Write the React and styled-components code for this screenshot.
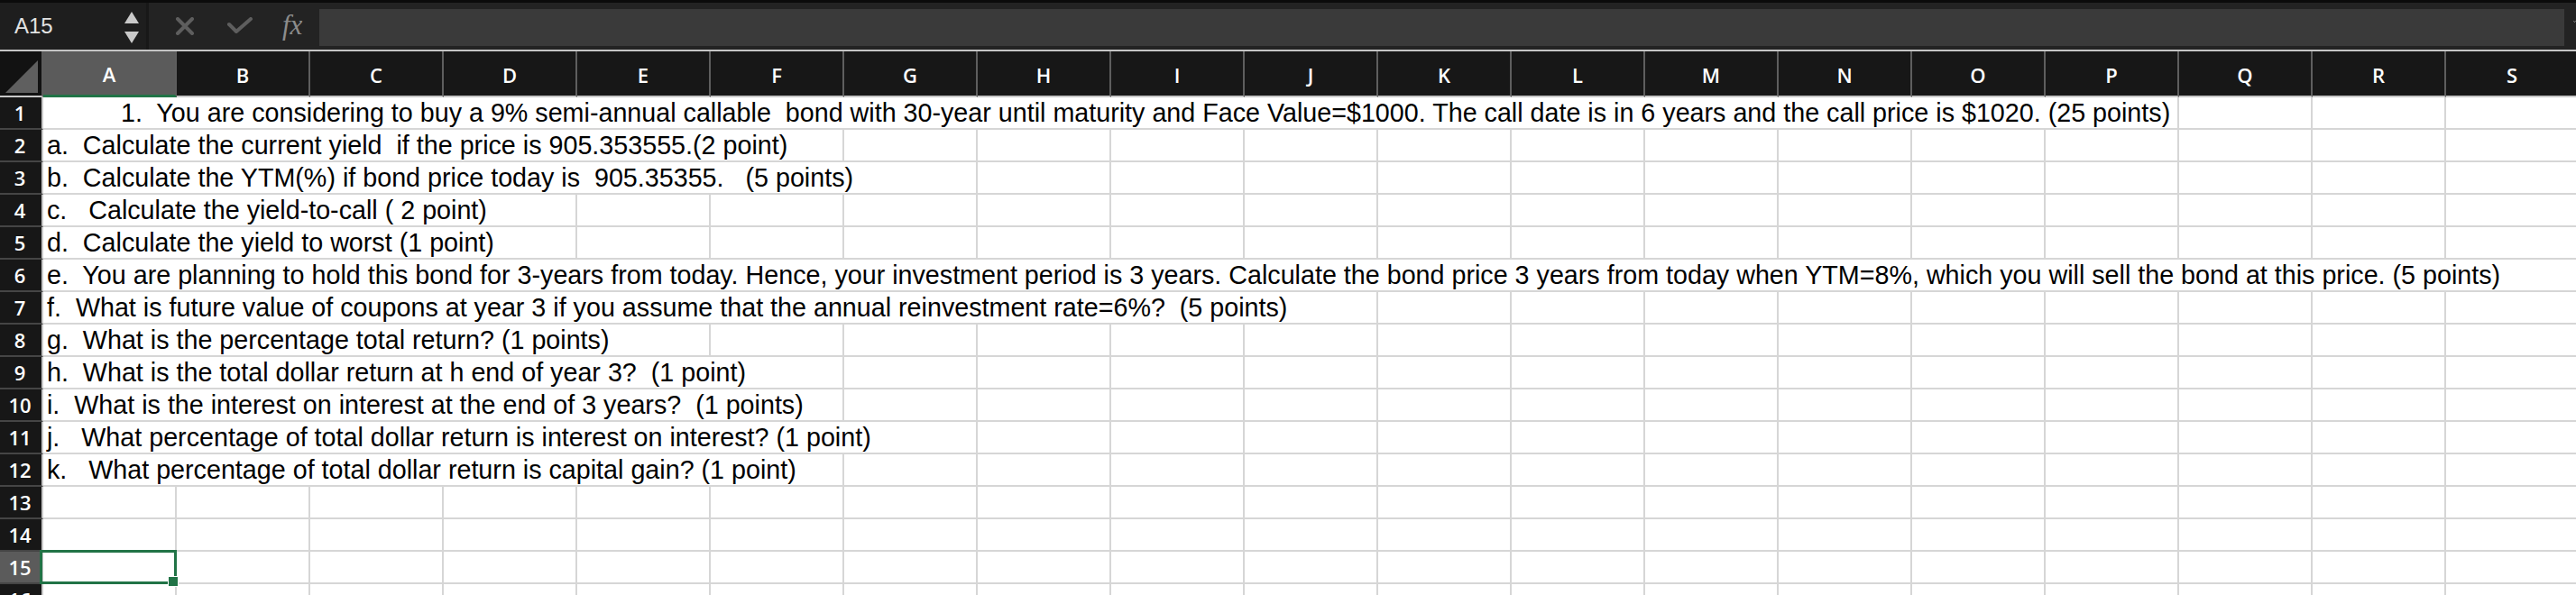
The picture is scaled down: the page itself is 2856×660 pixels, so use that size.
import React from 'react';
import styled, { createGlobalStyle } from 'styled-components';

const GlobalStyle = createGlobalStyle`
  html, body {
    margin: 0;
    padding: 0;
    background: #ffffff;
    overflow: hidden;
  }
`;

const COLS = 'ABCDEFGHIJKLMNOPQRS'.split('');

// text rows: span is the number of columns the text runs over
const ROWS = [
  { text: '1.  You are considering to buy a 9% semi-annual callable  bond with 30-year until maturity and Face Value=$1000. The call date is in 6 years and the call price is $1020. (25 points)', span: 16, indent: 86 },
  { text: 'a.  Calculate the current yield  if the price is 905.353555.(2 point)', span: 6 },
  { text: 'b.  Calculate the YTM(%) if bond price today is  905.35355.   (5 points)', span: 7 },
  { text: 'c.   Calculate the yield-to-call ( 2 point)', span: 4 },
  { text: 'd.  Calculate the yield to worst (1 point)', span: 4 },
  { text: 'e.  You are planning to hold this bond for 3-years from today. Hence, your investment period is 3 years. Calculate the bond price 3 years from today when YTM=8%, which you will sell the bond at this price. (5 points)', span: 19 },
  { text: 'f.  What is future value of coupons at year 3 if you assume that the annual reinvestment rate=6%?  (5 points)', span: 10 },
  { text: 'g.  What is the percentage total return? (1 points)', span: 5 },
  { text: 'h.  What is the total dollar return at h end of year 3?  (1 point)', span: 6 },
  { text: 'i.  What is the interest on interest at the end of 3 years?  (1 points)', span: 6 },
  { text: 'j.   What percentage of total dollar return is interest on interest? (1 point)', span: 7 },
  { text: 'k.   What percentage of total dollar return is capital gain? (1 point)', span: 6 },
  null,
  null,
  null,
  null,
];

const SELECTED_ROW = 15;

const Page = styled.div`
  width: 2856px;
  height: 660px;
  overflow: hidden;
  background: #ffffff;
`;

const FormulaBar = styled.div`
  height: 52px;
  border-top: 3px solid #0b0b0b;
  border-bottom: 2px solid #c4c4c4;
  background: #232323;
  display: flex;
  align-items: stretch;
`;

const NameBox = styled.div`
  width: 165px;
  background: #1e1e1e;
  border-right: 3px solid #181818;
  display: flex;
  align-items: center;
  justify-content: space-between;
  padding: 0 8px 0 16px;
  box-sizing: border-box;
  font-family: 'Liberation Sans', Arial, sans-serif;
  font-size: 24px;
  color: #e2e2e2;
`;

const Stepper = styled.div`
  display: flex;
  flex-direction: column;
  gap: 9px;
  padding-top: 2px;
`;

const Actions = styled.div`
  width: 189px;
  display: flex;
  align-items: center;
  padding-left: 29px;
  box-sizing: border-box;
  gap: 35px;
`;

const Fx = styled.span`
  font-family: 'Liberation Serif', 'Times New Roman', serif;
  font-style: italic;
  font-size: 31px;
  color: #8c8c8c;
  margin-left: -3px;
  line-height: 1;
  padding-bottom: 4px;
`;

const FormulaInput = styled.div`
  flex: 1;
  margin: 7px 10px 4px 0;
  background: #3a3a3a;
`;

const Chevron = styled.div`
  width: 3px;
  display: flex;
  align-items: center;
  overflow: hidden;
  padding-bottom: 10px;
`;

const Sheet = styled.div`
  display: grid;
  grid-template-columns: 48px repeat(19, 148px);
  grid-template-rows: 51px repeat(16, 36px);
`;

const Corner = styled.div`
  background: #121212;
  border-right: 2px solid #5c5c5c;
  border-bottom: 2px solid #c8c8c8;
  display: flex;
  align-items: flex-end;
  justify-content: flex-end;
  padding: 0 4px 3px 0;
`;

const ColHeader = styled.div`
  background: ${(p) => (p.$active ? '#5b5b5b' : '#171717')};
  border-right: 2px solid #5e5e5e;
  border-bottom: ${(p) => (p.$active ? '3px solid #217346' : '2px solid #c8c8c8')};
  display: flex;
  align-items: center;
  justify-content: center;
  font-family: 'Open Sans', 'Noto Sans', sans-serif;
  font-size: 22px;
  font-weight: 600;
  color: #ffffff;
  padding-top: 2px;
`;

const RowHeader = styled.div`
  background: ${(p) => (p.$active ? '#5b5b5b' : '#171717')};
  border-right: 2px solid #c9c9c9;
  border-bottom: 2px solid #454545;
  display: flex;
  align-items: center;
  justify-content: center;
  font-family: 'Open Sans', 'Noto Sans', sans-serif;
  font-size: 22px;
  font-weight: 600;
  color: #ffffff;
  padding-right: 2px;
  overflow: hidden;
`;

const Cell = styled.div`
  grid-column: span ${(p) => p.$span || 1};
  position: relative;
  background: #ffffff;
  border-right: 2px solid #d6d6d6;
  border-bottom: 2px solid #d6d6d6;
  font-family: 'Liberation Sans', Arial, Helvetica, sans-serif;
  font-size: 28.7px;
  line-height: 35px;
  color: #000000;
  white-space: pre;
  padding-left: ${(p) => p.$indent || 4}px;
  overflow: visible;
`;

const Selection = styled.div`
  position: absolute;
  top: -2px;
  left: -4px;
  right: -2px;
  bottom: -2px;
  border: 3px solid #217346;
  z-index: 2;
  pointer-events: none;
`;

const Handle = styled.div`
  position: absolute;
  right: -5px;
  bottom: -6px;
  width: 10px;
  height: 10px;
  background: #217346;
  border: 1px solid #ffffff;
`;

function Triangle({ up }) {
  return (
    <svg width="16" height="13" viewBox="0 0 16 13">
      <polygon points={up ? '8,0 16,13 0,13' : '0,0 16,0 8,13'} fill="#c9c9c9" />
    </svg>
  );
}

function CancelIcon() {
  return (
    <svg width="22" height="20" viewBox="0 0 22 20">
      <path d="M3 2 L19 18 M19 2 L3 18" stroke="#5e5e5e" strokeWidth="4" strokeLinecap="round" />
    </svg>
  );
}

function EnterIcon() {
  return (
    <svg width="30" height="20" viewBox="0 0 30 20">
      <path d="M3 8 L11 16 L27 2" stroke="#5e5e5e" strokeWidth="4" fill="none" strokeLinecap="round" strokeLinejoin="round" />
    </svg>
  );
}

function CornerMark() {
  return (
    <svg width="36" height="36" viewBox="0 0 36 36">
      <polygon points="36,0 36,36 0,36" fill="#5f5f5f" />
    </svg>
  );
}

function SheetRow({ index, row }) {
  const active = index === SELECTED_ROW;
  const cells = [];
  if (row) {
    cells.push(
      <Cell key="t" $span={row.span} $indent={row.indent}>
        {row.text}
      </Cell>
    );
    for (let c = row.span; c < COLS.length; c++) cells.push(<Cell key={c} />);
  } else {
    COLS.forEach((col, c) => {
      const selected = active && c === 0;
      cells.push(
        <Cell key={c}>
          {selected && (
            <Selection>
              <Handle />
            </Selection>
          )}
        </Cell>
      );
    });
  }
  return (
    <>
      <RowHeader $active={active}>{index}</RowHeader>
      {cells}
    </>
  );
}

export default function App() {
  return (
    <Page>
      <GlobalStyle />
      <FormulaBar>
        <NameBox>
          A15
          <Stepper>
            <Triangle up />
            <Triangle />
          </Stepper>
        </NameBox>
        <Actions>
          <CancelIcon />
          <EnterIcon />
          <Fx>fx</Fx>
        </Actions>
        <FormulaInput />
        <Chevron>
          <svg width="10" height="8" viewBox="0 0 10 8">
            <path d="M1 1 L5 6 L9 1" stroke="#bdbdbd" strokeWidth="2" fill="none" />
          </svg>
        </Chevron>
      </FormulaBar>
      <Sheet>
        <Corner>
          <CornerMark />
        </Corner>
        {COLS.map((c, i) => (
          <ColHeader key={c} $active={i === 0}>
            {c}
          </ColHeader>
        ))}
        {ROWS.map((row, i) => (
          <SheetRow key={i} index={i + 1} row={row} />
        ))}
      </Sheet>
    </Page>
  );
}
